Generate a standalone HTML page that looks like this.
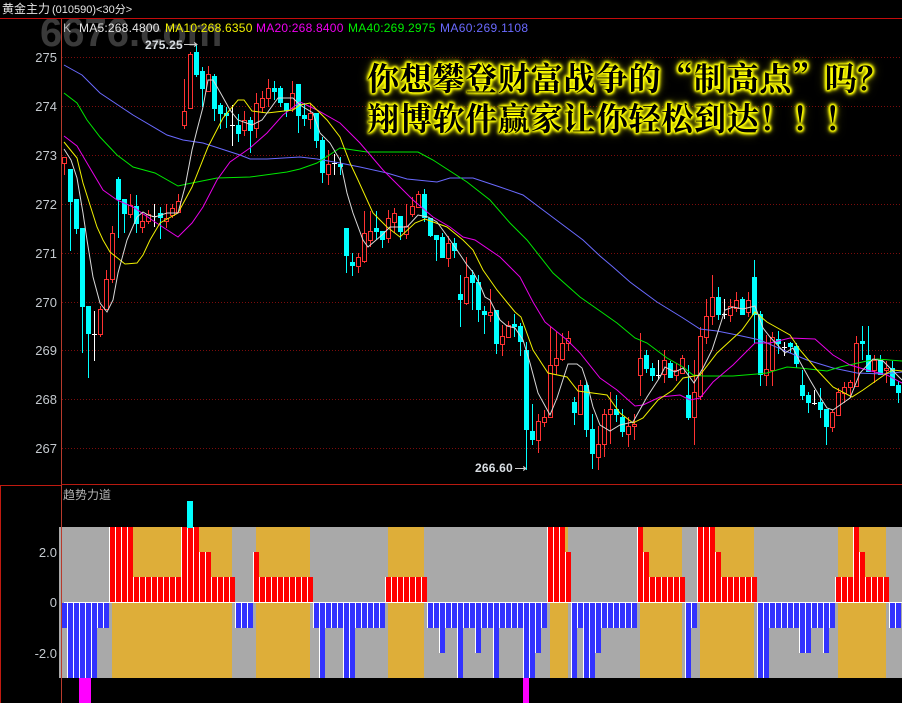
<!DOCTYPE html>
<html><head><meta charset="utf-8"><title>黄金主力</title>
<style>
html,body{margin:0;padding:0;background:#000;}
#p{position:relative;width:902px;height:703px;background:#000;overflow:hidden;font-family:"Liberation Sans","Noto Sans CJK SC",sans-serif;}
#p div{position:absolute;white-space:nowrap;}
svg{position:absolute;left:0;top:0;}
.ax{width:50px;left:7px;text-align:right;font-size:13px;line-height:16px;color:#c4c9ce;}
.lg{top:21px;font-size:12px;line-height:15px;letter-spacing:.22px;}
.pk{font-size:12px;font-weight:bold;line-height:14px;color:#d8dde2;letter-spacing:.2px;}
.big{left:367px;font-family:"Noto Serif CJK SC",serif;font-weight:bold;font-size:32px;letter-spacing:.7px;line-height:40px;color:#000;
text-shadow:0 0 1px #ff0,0 0 2px #ff0,0 0 2px #ff0,0 0 2px #ff0,0 0 3px #ff0,0 0 3px #ff0,0 0 3px #ff0,0 0 4px #ff0,0 0 4px #ff0,0 0 6px #dd0,0 0 8px #aa0,0 0 12px #660;}
</style></head><body>
<div id="p">
<div style="left:40px;top:19px;height:29px;overflow:hidden;font-size:40px;font-weight:bold;line-height:28px;color:#3a3a3a;">6676.com</div>
<svg width="902" height="703" viewBox="0 0 902 703">
<defs>
<pattern id="r" patternUnits="userSpaceOnUse" x="61" y="0" width="6" height="10" shape-rendering="crispEdges"><rect width="6" height="10" fill="#f00"/><rect width="1" height="10" fill="#fff"/></pattern>
<pattern id="b" patternUnits="userSpaceOnUse" x="61" y="0" width="6" height="10" shape-rendering="crispEdges"><rect width="6" height="10" fill="#3232ff"/><rect width="1" height="10" fill="#fff"/></pattern>
</defs>
<g shape-rendering="crispEdges">
<path d="M62 57.5H902M62 106.5H902M62 155.5H902M62 204.5H902M62 253.5H902M62 302.5H902M62 350.5H902M62 399.5H902M62 448.5H902" stroke="#7c0c0c" stroke-dasharray="1 2" fill="none"/>
<!-- red wicks -->
<path fill="none" stroke="#ff3232" d="M64.5 157V175M100.5 306V337M106.5 270V309M112.5 226V283M130.5 194V218M142.5 212V233M148.5 210V224M166.5 204V228M172.5 204V218M178.5 194V213M184.5 79V129M190.5 52V108M208.5 66V91M244.5 111V136M256.5 93V138M262.5 91V113M268.5 79V107M292.5 81V112M310.5 103V129M328.5 150V185M358.5 253V273M364.5 211V263M370.5 211V247M388.5 210V243M394.5 208V233M406.5 204V239M412.5 197V217M418.5 191V208M448.5 236V267M466.5 257V305M490.5 289V322M502.5 325V356M508.5 321V337M538.5 414V453M544.5 410V427M550.5 327V417M556.5 332V375M562.5 333V361M568.5 331V351M580.5 380V414M598.5 426V470M604.5 409V457M610.5 392V444M628.5 417V447M634.5 414V440M640.5 333V396M664.5 350V383M676.5 363V381M682.5 355V373M694.5 360V445M700.5 327V400M706.5 299V344M712.5 275V325M730.5 299V322M736.5 292V312M748.5 292V317M766.5 335V386M772.5 332V386M832.5 410V432M838.5 388V415M844.5 382V403M850.5 380V398M856.5 336V386M874.5 355V383M886.5 361V383"/>
<!-- red bodies -->
<path fill="#000" stroke="#ff3232" d="M62.5 157.5h4V163.5h-4zM98.5 309.5h4V334.5h-4zM104.5 279.5h4V309.5h-4zM110.5 233.5h4V279.5h-4zM128.5 205.5h4V214.5h-4zM140.5 221.5h4V227.5h-4zM146.5 214.5h4V221.5h-4zM164.5 218.5h4V221.5h-4zM170.5 208.5h4V215.5h-4zM176.5 201.5h4V212.5h-4zM182.5 111.5h4V125.5h-4zM188.5 54.5h4V108.5h-4zM206.5 74.5h4V91.5h-4zM242.5 120.5h4V130.5h-4zM254.5 103.5h4V128.5h-4zM260.5 98.5h4V107.5h-4zM266.5 88.5h4V98.5h-4zM290.5 93.5h4V108.5h-4zM308.5 113.5h4V119.5h-4zM326.5 164.5h4V174.5h-4zM356.5 257.5h4V266.5h-4zM362.5 233.5h4V261.5h-4zM368.5 231.5h4V240.5h-4zM386.5 218.5h4V238.5h-4zM392.5 213.5h4V222.5h-4zM404.5 226.5h4V234.5h-4zM410.5 206.5h4V214.5h-4zM416.5 194.5h4V207.5h-4zM446.5 243.5h4V258.5h-4zM464.5 277.5h4V303.5h-4zM488.5 312.5h4V315.5h-4zM500.5 336.5h4V344.5h-4zM506.5 325.5h4V337.5h-4zM536.5 421.5h4V440.5h-4zM542.5 417.5h4V422.5h-4zM548.5 365.5h4V417.5h-4zM554.5 358.5h4V365.5h-4zM560.5 343.5h4V359.5h-4zM566.5 338.5h4V343.5h-4zM578.5 385.5h4V414.5h-4zM596.5 444.5h4V457.5h-4zM602.5 414.5h4V444.5h-4zM608.5 409.5h4V414.5h-4zM626.5 426.5h4V434.5h-4zM632.5 424.5h4V426.5h-4zM638.5 358.5h4V375.5h-4zM662.5 360.5h4V374.5h-4zM674.5 370.5h4V375.5h-4zM680.5 358.5h4V373.5h-4zM692.5 392.5h4V417.5h-4zM698.5 336.5h4V396.5h-4zM704.5 316.5h4V337.5h-4zM710.5 297.5h4V316.5h-4zM728.5 306.5h4V315.5h-4zM734.5 300.5h4V308.5h-4zM746.5 300.5h4V312.5h-4zM764.5 369.5h4V375.5h-4zM770.5 337.5h4V370.5h-4zM830.5 412.5h4V427.5h-4zM836.5 392.5h4V415.5h-4zM842.5 387.5h4V393.5h-4zM848.5 382.5h4V387.5h-4zM854.5 343.5h4V386.5h-4zM872.5 360.5h4V370.5h-4zM884.5 368.5h4V370.5h-4z"/>
<!-- cyan wicks -->
<path fill="none" stroke="#0ff" d="M70.5 169V251M76.5 199V234M82.5 228V353M88.5 306V378M118.5 177V238M124.5 199V233M136.5 195V233M160.5 207V239M196.5 44V77M202.5 67V107M214.5 74V121M220.5 103V129M226.5 107V128M238.5 114V142M250.5 117V153M274.5 81V100M280.5 86V107M286.5 103V117M298.5 84V133M304.5 103V126M316.5 113V148M322.5 137V183M340.5 157V175M346.5 228V273M352.5 253V276M376.5 211V240M382.5 231V248M400.5 216V240M424.5 189V222M430.5 218V237M436.5 235V261M442.5 233V258M454.5 238V258M460.5 275V327M472.5 270V310M478.5 275V322M484.5 306V334M496.5 310V354M514.5 314V337M520.5 323V356M526.5 342V470M532.5 404V445M574.5 397V425M586.5 382V437M592.5 414V469M616.5 395V422M622.5 409V437M646.5 350V373M652.5 363V381M670.5 361V378M688.5 365V420M718.5 287V320M742.5 297V315M754.5 260V343M760.5 311V386M778.5 331V354M790.5 342V353M796.5 343V368M802.5 370V400M808.5 392V413M820.5 388V418M826.5 409V445M862.5 326V360M868.5 326V372M880.5 355V375M892.5 361V386M898.5 381V403"/>
<!-- cyan bodies -->
<path fill="#0ff" d="M68 169h5V202h-5zM74 199h5V229h-5zM80 228h5V307h-5zM86 306h5V334h-5zM116 179h5V200h-5zM122 199h5V214h-5zM134 206h5V224h-5zM158 213h5V218h-5zM194 52h5V75h-5zM200 71h5V89h-5zM212 76h5V109h-5zM218 105h5V114h-5zM224 113h5V116h-5zM236 125h5V134h-5zM248 120h5V131h-5zM272 88h5V92h-5zM278 88h5V103h-5zM284 103h5V111h-5zM296 84h5V116h-5zM302 115h5V119h-5zM314 113h5V141h-5zM320 140h5V173h-5zM338 164h5V167h-5zM344 228h5V256h-5zM350 262h5V266h-5zM374 228h5V232h-5zM380 231h5V240h-5zM398 216h5V232h-5zM422 194h5V218h-5zM428 218h5V236h-5zM434 235h5V240h-5zM440 237h5V258h-5zM452 243h5V251h-5zM458 294h5V300h-5zM470 275h5V283h-5zM476 282h5V310h-5zM482 311h5V315h-5zM494 310h5V344h-5zM512 324h5V327h-5zM518 326h5V342h-5zM524 350h5V430h-5zM530 431h5V440h-5zM572 402h5V413h-5zM584 385h5V430h-5zM590 429h5V454h-5zM614 409h5V415h-5zM620 417h5V432h-5zM644 355h5V369h-5zM650 368h5V376h-5zM668 363h5V378h-5zM686 395h5V418h-5zM716 297h5V315h-5zM740 299h5V315h-5zM752 277h5V315h-5zM758 314h5V375h-5zM776 339h5V344h-5zM788 343h5V347h-5zM794 346h5V364h-5zM800 385h5V396h-5zM806 395h5V403h-5zM818 402h5V410h-5zM824 409h5V427h-5zM860 341h5V344h-5zM866 355h5V372h-5zM878 360h5V375h-5zM890 368h5V386h-5zM896 385h5V393h-5z"/>
<!-- white doji -->
<path fill="none" stroke="#fff" d="M94.5 311V361M92 334.5h5M154.5 204V227M152 216.5h5M232.5 105V146M230 125.5h5M334.5 154V175M332 163.5h5M658.5 360V380M656 375.5h5M724.5 299V319M722 314.5h5M784.5 342V356M782 347.5h5M814.5 390V405M812 403.5h5"/>
<!-- arrows on peaks -->
<path fill="none" stroke="#c8c8c8" d="M184 44.5H197M194 42.5l3 2l-3 2M515 468.5H526M523 466.5l3 2l-3 2"/>
</g>
<!-- MAs -->
<g fill="none" stroke-width="1">
<polyline stroke="#6a6aff" points="64,65 82,75 100,93 133,115 167,135 183,140 203,143 240,155 250,159 267,159 300,157 317,159 340,163 360,167 387,173 407,179 437,182 450,178 473,178 500,187 523,195 543,210 583,240 600,256 613,267 630,282 657,302 683,318 700,329 717,331 737,335 760,340 783,350 807,360 833,368 857,373 883,374 902,372"/>
<polyline stroke="#00e800" points="64,93 77,103 87,120 100,137 117,155 133,167 155,173 178,186 187,184 217,178 250,177 287,172 300,169 317,163 340,148 367,152 418,152 433,160 467,182 490,200 510,223 527,240 553,273 580,297 600,311 617,323 635,338 647,343 667,358 683,367 693,375 703,376 733,376 757,374 767,373 787,367 800,368 827,371 840,367 867,361 877,359 902,361"/>
<polyline stroke="#e800e8" points="64,136 77,146 87,163 103,190 117,200 133,207 155,222 178,237 192,223 203,207 217,180 230,162 250,148 267,133 283,115 300,102 317,110 340,123 360,143 383,170 413,200 433,217 450,227 463,237 475,240 500,257 520,277 533,302 545,322 567,340 580,353 600,378 617,390 635,406 643,405 660,397 680,395 690,400 700,398 713,382 733,365 755,343 770,343 790,338 815,339 833,355 850,365 867,370 887,375 902,383"/>
<polyline stroke="#f0f000" points="64,142 77,158 83,183 97,227 103,240 110,252 125,264 137,263 143,255 150,240 160,223 178,213 192,187 208,147 223,118 238,100 244,100 252,111 267,113 293,110 300,105 310,103 327,120 340,137 350,163 358,180 373,213 387,227 400,237 415,223 425,219 447,227 463,240 473,250 483,270 497,290 515,312 521,317 533,350 548,373 567,377 578,391 600,394 607,395 620,413 633,423 643,418 658,400 673,390 683,378 700,375 717,353 742,330 755,312 767,322 790,335 800,350 817,370 833,387 852,397 863,390 887,373 893,370 902,371"/>
<polyline stroke="#d8d8d8" points="64,149 71,160 77,178 83,213 87,240 93,277 100,303 107,312 113,300 118,273 127,240 137,217 143,212 148,215 155,217 167,213 178,213 185,187 192,150 197,130 203,107 208,80 213,80 220,92 230,110 238,120 252,125 262,120 278,98 293,98 300,105 313,113 320,133 330,143 340,160 347,193 353,213 363,240 368,247 382,235 390,227 407,227 418,215 428,217 437,222 450,240 457,250 467,265 473,272 480,285 485,297 490,300 500,320 507,326 515,328 523,340 530,363 538,393 550,415 557,398 568,364 577,364 582,368 587,383 593,407 600,425 610,431 620,425 633,422 647,397 660,377 665,367 675,372 683,368 694,383 703,368 712,350 725,310 733,307 743,309 755,306 763,328 770,337 785,353 793,348 800,362 810,380 820,397 827,408 833,410 850,398 860,373 873,359 883,361 902,380"/>
</g>
<!-- lower panel -->
<g shape-rendering="crispEdges">
<rect x="59" y="527" width="843" height="151" fill="#a9a9a9"/>
<g fill="#deae39">
<rect x="112" y="527" width="120" height="151"/><rect x="256" y="527" width="54" height="151"/><rect x="388" y="527" width="36" height="151"/><rect x="550" y="527" width="18" height="151"/><rect x="640" y="527" width="42" height="151"/><rect x="700" y="527" width="54" height="151"/><rect x="838" y="527" width="48" height="151"/>
</g>
<g fill="url(#r)">
<rect x="109" y="527" width="24" height="75"/><rect x="133" y="577" width="48" height="25"/><rect x="181" y="527" width="18" height="75"/><rect x="199" y="552" width="12" height="50"/><rect x="211" y="577" width="24" height="25"/><rect x="253" y="552" width="6" height="50"/><rect x="259" y="577" width="54" height="25"/><rect x="385" y="577" width="42" height="25"/><rect x="547" y="527" width="18" height="75"/><rect x="565" y="552" width="6" height="50"/><rect x="637" y="527" width="6" height="75"/><rect x="643" y="552" width="6" height="50"/><rect x="649" y="577" width="36" height="25"/><rect x="697" y="527" width="18" height="75"/><rect x="715" y="552" width="6" height="50"/><rect x="721" y="577" width="36" height="25"/><rect x="835" y="577" width="18" height="25"/><rect x="853" y="527" width="6" height="75"/><rect x="859" y="552" width="6" height="50"/><rect x="865" y="577" width="24" height="25"/>
</g>
<g fill="url(#b)">
<rect x="61" y="603" width="6" height="25"/><rect x="67" y="603" width="30" height="75"/><rect x="97" y="603" width="12" height="25"/><rect x="235" y="603" width="18" height="25"/><rect x="313" y="603" width="6" height="25"/><rect x="319" y="603" width="6" height="75"/><rect x="325" y="603" width="18" height="25"/><rect x="343" y="603" width="12" height="75"/><rect x="355" y="603" width="30" height="25"/><rect x="427" y="603" width="12" height="25"/><rect x="439" y="603" width="6" height="50"/><rect x="445" y="603" width="12" height="25"/><rect x="457" y="603" width="6" height="75"/><rect x="463" y="603" width="12" height="25"/><rect x="475" y="603" width="6" height="50"/><rect x="481" y="603" width="12" height="25"/><rect x="493" y="603" width="6" height="75"/><rect x="499" y="603" width="24" height="25"/><rect x="523" y="603" width="12" height="75"/><rect x="535" y="603" width="6" height="50"/><rect x="541" y="603" width="6" height="25"/><rect x="571" y="603" width="6" height="75"/><rect x="577" y="603" width="6" height="25"/><rect x="583" y="603" width="12" height="75"/><rect x="595" y="603" width="6" height="50"/><rect x="601" y="603" width="36" height="25"/><rect x="685" y="603" width="6" height="75"/><rect x="691" y="603" width="6" height="25"/><rect x="757" y="603" width="12" height="75"/><rect x="769" y="603" width="30" height="25"/><rect x="799" y="603" width="12" height="50"/><rect x="811" y="603" width="12" height="25"/><rect x="823" y="603" width="6" height="50"/><rect x="829" y="603" width="6" height="25"/><rect x="889" y="603" width="12" height="25"/>
</g>
<rect x="64" y="602" width="838" height="1" fill="#fff"/>
<rect x="187" y="501" width="6" height="27" fill="#0ff"/>
<rect x="79" y="678" width="12" height="25" fill="#f0f"/>
<rect x="523" y="678" width="6" height="25" fill="#f0f"/>
<!-- frame -->
<rect x="0" y="18" width="902" height="1" fill="#c40c0c"/>
<rect x="61" y="19" width="1" height="684" fill="#b83a2c"/>
<rect x="61" y="484" width="841" height="1" fill="#b81a10"/>
<rect x="0" y="485" width="61" height="1" fill="#c01a10"/>
<rect x="0" y="485" width="1" height="218" fill="#c01a10"/>
</g>
</svg>
<div style="left:2px;top:2px;font-size:12px;line-height:14px;color:#e6e6e6;">黄金主力<span style="font-size:11px;margin-left:2px;">(010590)&lt;30分&gt;</span></div>
<div class="lg" style="left:63px;color:#b8b8b8;">K</div>
<div class="lg" style="left:79px;color:#e8e8e8;">MA5:268.4800</div>
<div class="lg" style="left:165px;color:#f0f000;">MA10:268.6350</div>
<div class="lg" style="left:256px;color:#f000f0;">MA20:268.8400</div>
<div class="lg" style="left:348px;color:#00f000;">MA40:269.2975</div>
<div class="lg" style="left:440px;color:#6a6aff;letter-spacing:.35px;">MA60:269.1108</div>
<div class="ax" style="top:50px;">275</div>
<div class="ax" style="top:99px;">274</div>
<div class="ax" style="top:148px;">273</div>
<div class="ax" style="top:197px;">272</div>
<div class="ax" style="top:246px;">271</div>
<div class="ax" style="top:295px;">270</div>
<div class="ax" style="top:343px;">269</div>
<div class="ax" style="top:392px;">268</div>
<div class="ax" style="top:441px;">267</div>
<div class="pk" style="left:145px;top:38px;">275.25</div>
<div class="pk" style="left:475px;top:461px;">266.60</div>
<div style="left:63px;top:488px;font-size:12px;line-height:15px;color:#b4b4b4;">趋势力道</div>
<div class="ax" style="top:545px;">2.0</div>
<div class="ax" style="top:595px;">0</div>
<div class="ax" style="top:646px;">-2.0</div>
<div class="big" style="top:57px;">你想攀登财富战争的“制高点”吗？</div>
<div class="big" style="top:97px;">翔博软件赢家让你轻松到达！！！</div>
</div>
</body></html>
